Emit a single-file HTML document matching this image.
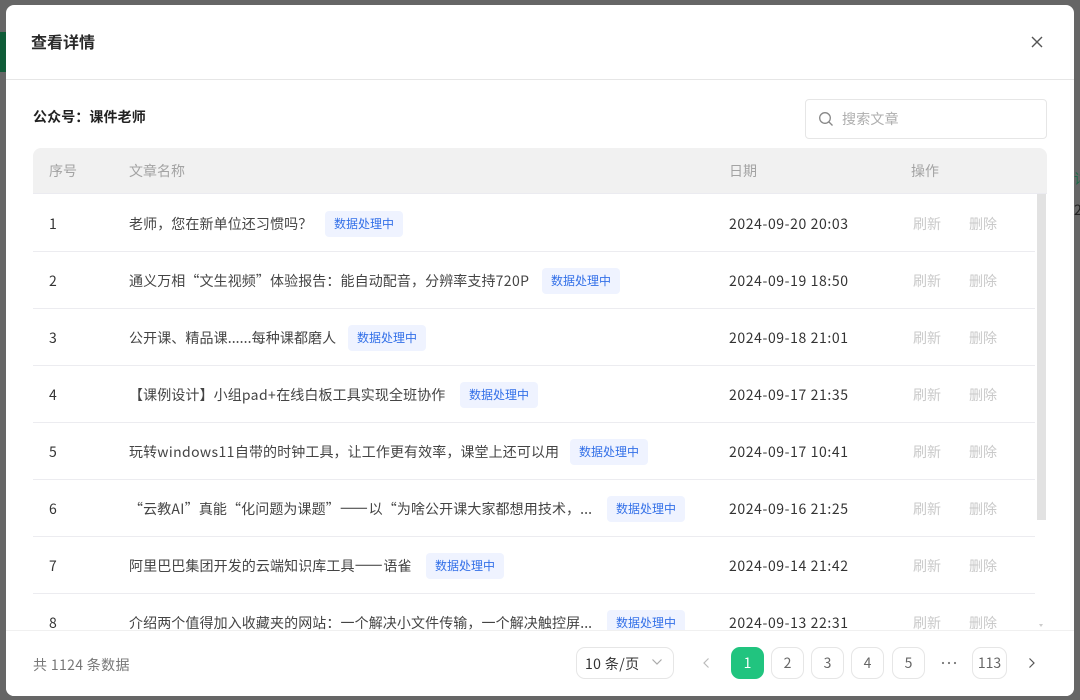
<!DOCTYPE html>
<html lang="zh-CN"><head><meta charset="utf-8"><title>查看详情</title>
<style>
*{box-sizing:border-box}
html,body{margin:0;padding:0}
body{width:1080px;height:700px;overflow:hidden;position:relative;background:#666;font-family:"Noto Sans CJK SC","Liberation Sans",sans-serif;font-size:14px;color:#333}
.a{position:absolute;white-space:nowrap}
#modal{position:absolute;left:6px;top:5px;width:1068px;height:691px;background:#fff;border-radius:8px;overflow:hidden}
.row{position:absolute;left:27px;width:1002px;height:57px;border-bottom:1px solid #ececf0}
.row span{position:absolute;white-space:nowrap;top:0;line-height:58px}
.n{left:16px;color:#333}
.t{left:96px;color:#444;font-size:14px;letter-spacing:.1px}
.row .t b{font-weight:400;letter-spacing:.4px}
.row .t i{font-style:normal;-webkit-text-stroke:.4px #444;letter-spacing:.8px}
.d{left:696px;color:#333;letter-spacing:.6px}
.r1,.r2{color:#c9c9c9;font-size:14px}
.r1{left:880px}.r2{left:936px}
.row .tag{height:26px;line-height:25px;top:15.5px;background:#eff3ff;color:#3370e8;font-size:12px;border-radius:4px;width:78px;text-align:center}
.pg{position:absolute;top:642px;width:33px;height:32px;border:1px solid #e6e6e6;border-radius:9px;text-align:center;line-height:30px;color:#666;font-size:14px;background:#fff}
</style></head><body>
<div class="a" style="left:0;top:32px;width:6px;height:40px;background:#0f5c38"></div>
<div class="a" style="left:1074px;top:170px;color:#1f6b4a;font-size:14px;line-height:18px">详</div>
<div class="a" style="left:1074px;top:201px;color:#222;font-size:14px;line-height:18px">2</div>
<div id="modal">
<div class="a" style="left:25px;top:24px;font-size:16px;font-weight:700;line-height:24px;color:#2a2a2a">查看详情</div>
<svg class="a" style="left:1024px;top:30px" width="14" height="14" viewBox="0 0 14 14"><path d="M2 2L12 12M12 2L2 12" stroke="#555" stroke-width="1.4" fill="none"/></svg>
<div class="a" style="left:0;top:74px;width:1068px;height:1px;background:#e6e6e6"></div>
<div class="a" style="left:27px;top:102px;font-size:14px;font-weight:700;line-height:20px;color:#222;letter-spacing:.1px">公众号：课件老师</div>
<div class="a" style="left:799px;top:94px;width:242px;height:40px;border:1px solid #e6e6e6;border-radius:4px"></div>
<svg class="a" style="left:812px;top:106px" width="16" height="16" viewBox="0 0 16 16"><circle cx="7" cy="7" r="5.3" stroke="#888" stroke-width="1.3" fill="none"/><path d="M11 11L14.5 14.5" stroke="#888" stroke-width="1.3" fill="none"/></svg>
<div class="a" style="left:836px;top:103px;color:#aeaeae;font-size:14px;line-height:22px;letter-spacing:.2px">搜索文章</div>

<div class="row" style="top:190px"><span class="n">1</span><span class="t">老师，您在新单位还习惯吗？</span><span class="tag" style="left:292px">数据处理中</span><span class="d">2024-09-20 20:03</span><span class="r1">刷新</span><span class="r2">删除</span></div>
<div class="row" style="top:247px"><span class="n">2</span><span class="t">通义万相“文生视频”体验报告：能自动配音，分辨率支持<b>720P</b></span><span class="tag" style="left:509px">数据处理中</span><span class="d">2024-09-19 18:50</span><span class="r1">刷新</span><span class="r2">删除</span></div>
<div class="row" style="top:304px"><span class="n">3</span><span class="t">公开课、精品课......每种课都磨人</span><span class="tag" style="left:315px">数据处理中</span><span class="d">2024-09-18 21:01</span><span class="r1">刷新</span><span class="r2">删除</span></div>
<div class="row" style="top:361px"><span class="n">4</span><span class="t">【课例设计】小组<b>pad+</b>在线白板工具实现全班协作</span><span class="tag" style="left:427px">数据处理中</span><span class="d">2024-09-17 21:35</span><span class="r1">刷新</span><span class="r2">删除</span></div>
<div class="row" style="top:418px"><span class="n">5</span><span class="t">玩转<b>windows11</b>自带的时钟工具，让工作更有效率，课堂上还可以用</span><span class="tag" style="left:537px">数据处理中</span><span class="d">2024-09-17 10:41</span><span class="r1">刷新</span><span class="r2">删除</span></div>
<div class="row" style="top:475px"><span class="n">6</span><span class="t">“云教<b>AI</b>”真能“化问题为课题”<i>——</i>以“为啥公开课大家都想用技术，...</span><span class="tag" style="left:574px">数据处理中</span><span class="d">2024-09-16 21:25</span><span class="r1">刷新</span><span class="r2">删除</span></div>
<div class="row" style="top:532px"><span class="n">7</span><span class="t">阿里巴巴集团开发的云端知识库工具<i>——</i>语雀</span><span class="tag" style="left:393px">数据处理中</span><span class="d">2024-09-14 21:42</span><span class="r1">刷新</span><span class="r2">删除</span></div>
<div class="row" style="top:589px;border:0"><span class="n">8</span><span class="t">介绍两个值得加入收藏夹的网站：一个解决小文件传输，一个解决触控屏...</span><span class="tag" style="left:574px">数据处理中</span><span class="d">2024-09-13 22:31</span><span class="r1">刷新</span><span class="r2">删除</span></div>

<div class="a" style="left:1031px;top:189px;width:9px;height:326px;background:#e2e2e2"></div>
<div class="a" style="left:1033px;top:619px;width:0;height:0;border-left:2.5px solid transparent;border-right:2.5px solid transparent;border-top:3px solid #ccc"></div>

<div class="a" style="left:27px;top:143px;width:1014px;height:46px;background:#f1f1f1;border-radius:8px 8px 0 0;border-bottom:1px solid #ebebf0"></div>
<div class="a" style="left:43px;top:143px;line-height:47px;color:#a3a3a3">序号</div>
<div class="a" style="left:123px;top:143px;line-height:47px;color:#a3a3a3">文章名称</div>
<div class="a" style="left:723px;top:143px;line-height:47px;color:#a3a3a3">日期</div>
<div class="a" style="left:905px;top:143px;line-height:47px;color:#a3a3a3">操作</div>

<div class="a" style="left:0;top:625px;width:1068px;height:66px;background:#fff;border-top:1px solid #f0f0f0"></div>
<div class="a" style="left:27px;top:650px;line-height:20px;color:#777;font-size:14px;letter-spacing:.35px">共 1124 条数据</div>
<div class="a" style="left:570px;top:642px;width:98px;height:32px;border:1px solid #e6e6e6;border-radius:9px"></div>
<div class="a" style="left:579px;top:643px;line-height:32px;color:#333;font-size:14px;letter-spacing:.4px">10 条/页</div>
<svg class="a" style="left:645px;top:653px" width="12" height="9" viewBox="0 0 12 9"><path d="M1.5 1.5L6 6L10.5 1.5" stroke="#aaa" stroke-width="1.2" fill="none"/></svg>
<svg class="a" style="left:696px;top:652px" width="9" height="12" viewBox="0 0 9 12"><path d="M6.5 1.5L2 6L6.5 10.5" stroke="#bbb" stroke-width="1.2" fill="none"/></svg>
<div class="pg" style="left:725px;background:#21c47f;border-color:#21c47f;color:#fff">1</div>
<div class="pg" style="left:765px">2</div>
<div class="pg" style="left:805px">3</div>
<div class="pg" style="left:845px">4</div>
<div class="pg" style="left:886px">5</div>
<svg class="a" style="left:935px;top:656px" width="16" height="4" viewBox="0 0 16 4"><circle cx="2" cy="2" r="1.1" fill="#777"/><circle cx="8" cy="2" r="1.1" fill="#777"/><circle cx="14" cy="2" r="1.1" fill="#777"/></svg>
<div class="pg" style="left:966px;width:35px">113</div>
<svg class="a" style="left:1021px;top:652px" width="9" height="12" viewBox="0 0 9 12"><path d="M2.5 1.5L7 6L2.5 10.5" stroke="#555" stroke-width="1.2" fill="none"/></svg>
</div>
</body></html>
